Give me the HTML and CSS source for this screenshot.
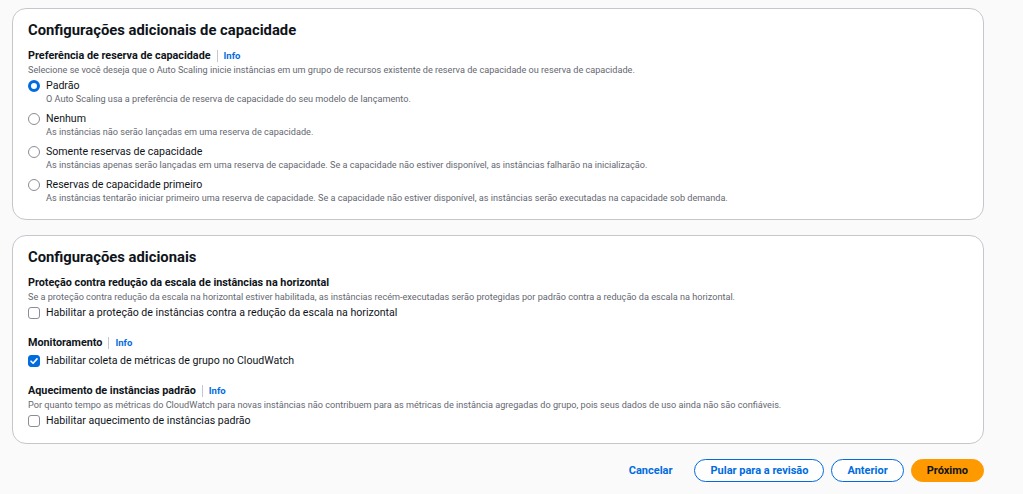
FILE: index.html
```html
<!DOCTYPE html>
<html lang="pt-BR">
<head>
<meta charset="utf-8">
<link rel="stylesheet" href="styles.css">
</head>
<body>
<main class="page">
  <section class="card">
    <h2 class="card-title">Configurações adicionais de capacidade</h2>
    <div class="field">
      <div class="field-label">Preferência de reserva de capacidade <span class="sep"></span><a class="info">Info</a></div>
      <p class="field-desc">Selecione se você deseja que o Auto Scaling inicie instâncias em um grupo de recursos existente de reserva de capacidade ou reserva de capacidade.</p>
      <div class="radio-group">
        <div class="radio-item">
          <span class="radio checked"></span>
          <div class="radio-text">
            <div class="opt-label">Padrão</div>
            <div class="opt-desc">O Auto Scaling usa a preferência de reserva de capacidade do seu modelo de lançamento.</div>
          </div>
        </div>
        <div class="radio-item">
          <span class="radio"></span>
          <div class="radio-text">
            <div class="opt-label">Nenhum</div>
            <div class="opt-desc">As instâncias não serão lançadas em uma reserva de capacidade.</div>
          </div>
        </div>
        <div class="radio-item">
          <span class="radio"></span>
          <div class="radio-text">
            <div class="opt-label">Somente reservas de capacidade</div>
            <div class="opt-desc">As instâncias apenas serão lançadas em uma reserva de capacidade. Se a capacidade não estiver disponível, as instâncias falharão na inicialização.</div>
          </div>
        </div>
        <div class="radio-item">
          <span class="radio"></span>
          <div class="radio-text">
            <div class="opt-label">Reservas de capacidade primeiro</div>
            <div class="opt-desc">As instâncias tentarão iniciar primeiro uma reserva de capacidade. Se a capacidade não estiver disponível, as instâncias serão executadas na capacidade sob demanda.</div>
          </div>
        </div>
      </div>
    </div>
  </section>

  <section class="card">
    <h2 class="card-title">Configurações adicionais</h2>
    <div class="field">
      <div class="field-label">Proteção contra redução da escala de instâncias na horizontal</div>
      <p class="field-desc">Se a proteção contra redução da escala na horizontal estiver habilitada, as instâncias recém-executadas serão protegidas por padrão contra a redução da escala na horizontal.</p>
      <label class="check-item"><span class="checkbox"></span><span class="opt-label">Habilitar a proteção de instâncias contra a redução da escala na horizontal</span></label>
    </div>
    <div class="field">
      <div class="field-label">Monitoramento <span class="sep"></span><a class="info">Info</a></div>
      <label class="check-item"><span class="checkbox checked"><svg viewBox="0 0 12 12" width="12" height="12"><path d="M3 6.2 L5.1 8.3 L9 3.9" fill="none" stroke="#fff" stroke-width="1.6" stroke-linecap="round" stroke-linejoin="round"/></svg></span><span class="opt-label">Habilitar coleta de métricas de grupo no CloudWatch</span></label>
    </div>
    <div class="field">
      <div class="field-label">Aquecimento de instâncias padrão <span class="sep"></span><a class="info">Info</a></div>
      <p class="field-desc">Por quanto tempo as métricas do CloudWatch para novas instâncias não contribuem para as métricas de instância agregadas do grupo, pois seus dados de uso ainda não são confiáveis.</p>
      <label class="check-item"><span class="checkbox"></span><span class="opt-label">Habilitar aquecimento de instâncias padrão</span></label>
    </div>
  </section>

  <div class="actions">
    <button class="btn link">Cancelar</button>
    <button class="btn normal">Pular para a revisão</button>
    <button class="btn normal">Anterior</button>
    <button class="btn primary">Próximo</button>
  </div>
</main>
</body>
</html>
```
FILE: styles.css
```css
* { box-sizing: border-box; }
html, body { margin: 0; padding: 0; }
body {
  background: #fafafa;
  font-family: Roboto, "Noto Sans", sans-serif;
  color: #0f141a;
  width: 1023px;
  height: 494px;
  overflow: hidden;
}
.page {
  padding: 8px 39px 0 12px;
  display: flex;
  flex-direction: column;
  gap: 15px;
}
.card {
  background: #fff;
  border: 1px solid #c6c6cd;
  border-radius: 14px;
  padding: 11px 15px 14px;
}
.card-title {
  margin: 0 0 9px;
  font-size: 14.8px;
  font-weight: 700;
  line-height: 20px;
}
.field + .field { margin-top: 15px; }
.field-label {
  display: flex;
  align-items: center;
  font-size: 10.8px;
  font-weight: 700;
  line-height: 14px;
}
.sep {
  display: inline-block;
  width: 1px;
  height: 12px;
  background: #c6c6cd;
  margin: 0 6px;
}
.info {
  color: #006ce0;
  font-size: 9.5px;
  font-weight: 700;
  line-height: 14px;
}
.field-desc {
  margin: 0;
  font-size: 9.15px;
  line-height: 14px;
  color: #656871;
}
.radio-group {
  display: flex;
  flex-direction: column;
  gap: 6px;
  margin-top: 2px;
}
.radio-item { display: flex; gap: 6px; align-items: flex-start; }
.radio {
  flex: none;
  width: 12px;
  height: 12px;
  border-radius: 50%;
  border: 1px solid #8c8c94;
  margin-top: 1px;
  background: #fff;
}
.radio.checked {
  border: 3.5px solid #006ce0;
}
.opt-label {
  font-size: 10.6px;
  line-height: 14px;
  color: #0f141a;
}
.opt-desc {
  font-size: 9.15px;
  line-height: 13px;
  color: #656871;
}
.check-item {
  display: flex;
  align-items: center;
  gap: 6px;
  height: 16px;
}
.field-desc + .check-item { margin-top: 1px; }
.field-label + .check-item { margin-top: 3px; }
.checkbox {
  flex: none;
  width: 12px;
  height: 12px;
  border: 1px solid #8c8c94;
  border-radius: 3px;
  background: #fff;
  display: flex;
}
.checkbox.checked { background: #006ce0; border-color: #006ce0; }
.checkbox svg { margin: -1px; }
.actions {
  display: flex;
  justify-content: flex-end;
  align-items: center;
  gap: 7px;
}
.btn {
  font-family: inherit;
  font-size: 11px;
  font-weight: 700;
  height: 23px;
  border-radius: 12px;
  padding: 0 15px;
  cursor: pointer;
}
.btn.link { background: none; border: none; color: #006ce0; padding: 0 4px; margin-right: 11px; }
.btn.normal { background: #fff; border: 1.5px solid #006ce0; color: #006ce0; }
.btn.primary { background: #ff9900; border: 1.5px solid #ff9900; color: #0f141a; }
```
